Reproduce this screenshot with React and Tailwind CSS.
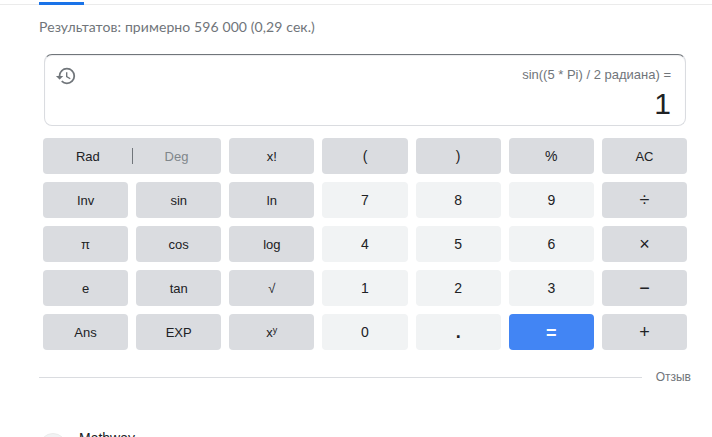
import React from "react";

const dark = "bg-[#dadce0]";
const light = "bg-[#f1f3f4]";
const small = "text-[13px]";
const digit = "text-[14px]";
const op = "text-[18px]";

const keys = [
  ["x!", dark, small],
  ["(", dark, digit],
  [")", dark, digit],
  ["%", dark, digit],
  ["AC", dark, small],
  ["Inv", dark, small],
  ["sin", dark, small],
  ["ln", dark, small],
  ["7", light, digit],
  ["8", light, digit],
  ["9", light, digit],
  ["÷", dark, op],
  ["π", dark, small],
  ["cos", dark, small],
  ["log", dark, small],
  ["4", light, digit],
  ["5", light, digit],
  ["6", light, digit],
  ["×", dark, op],
  ["e", dark, small],
  ["tan", dark, small],
  ["√", dark, small],
  ["1", light, digit],
  ["2", light, digit],
  ["3", light, digit],
  ["−", dark, op],
  ["Ans", dark, small],
  ["EXP", dark, small],
  ["xy", dark, small],
  ["0", light, digit],
  [".", light, "text-[18px] font-bold"],
  ["=", "bg-[#4285f4]", "text-[18px] font-bold text-white pt-px"],
  ["+", dark, op],
];

function Key({ label, tone, size }) {
  return (
    <button className={`flex h-9 items-center justify-center rounded-[4px] leading-none ${tone} ${size}`}>
      {label === "xy" ? (
        <span>
          x<sup className="top-[-4px] text-[9px]">y</sup>
        </span>
      ) : (
        label
      )}
    </button>
  );
}

function HistoryIcon() {
  return (
    <svg className="-mt-px size-[22px] fill-[#70757a]" viewBox="0 0 24 24">
      <path d="M13 3a9 9 0 0 0-9 9H1l3.89 3.89.07.14L9 12H6c0-3.87 3.13-7 7-7s7 3.13 7 7-3.13 7-7 7c-1.93 0-3.68-.79-4.94-2.06l-1.42 1.42A8.95 8.95 0 0 0 13 21a9 9 0 0 0 0-18zm-1 5v5l4.28 2.54.72-1.21-3.5-2.08V8H12z" />
    </svg>
  );
}

export default function App() {
  return (
    <div className="h-[437px] w-[712px] overflow-hidden bg-white font-['Liberation_Sans',Arial,sans-serif] text-[#202124]">
      <div className="h-[5px] border-b border-[#ebebeb] pl-[39px] pt-[2px]">
        <div className="h-[3px] w-[45px] bg-[#1a73e8]" />
      </div>
      <div className="flex h-[49px] items-start pl-[39px] pt-[12px]">
        <p className="whitespace-nowrap font-['Lato',sans-serif] text-[14px] leading-[20px] tracking-[0.1px] text-[#70757a]">
          Результатов: примерно 596 000 (0,29 сек.)
        </p>
      </div>
      <div className="ml-[44px] flex h-[72px] w-[642px] justify-between rounded-lg border border-[#dadce0] border-t-[#70757a] pl-[10px] pr-[14px] pt-[11px] shadow-[inset_0_1px_1px_#ebecee]">
        <HistoryIcon />
        <div className="text-right">
          <div className="text-[13px] leading-[18px] text-[#70757a]">sin((5 * Pi) / 2 радиана) =</div>
          <div className="mt-[2px] text-[30px] leading-[36px]">1</div>
        </div>
      </div>
      <div className="ml-[43px] mt-3 grid w-[644px] grid-cols-7 gap-2">
        <div className="col-span-2 flex h-9 items-center rounded-[4px] bg-[#dadce0] text-[13px] leading-none">
          <button className="flex-1 pl-px pt-px">Rad</button>
          <div className="h-4 w-px bg-[#70757a]" />
          <button className="flex-1 pr-px pt-px text-[#80868b]">Deg</button>
        </div>
        {keys.map(([label, tone, size]) => (
          <Key key={label} label={label} tone={tone} size={size} />
        ))}
      </div>
      <div className="ml-[39px] mt-[19px] flex h-4 w-[652px] items-center justify-between text-[12px] text-[#70757a]">
        <div className="h-px w-[603px] bg-[#dadce0]" />
        <span>Отзыв</span>
      </div>
      <div className="ml-[39px] mt-[43px] flex items-start">
        <div className="mt-[5px] size-7 rounded-full border border-[#ebebeb] bg-[#f1f3f4]" />
        <span className="ml-3 text-[14px] leading-[20px]">Mathway</span>
      </div>
    </div>
  );
}
